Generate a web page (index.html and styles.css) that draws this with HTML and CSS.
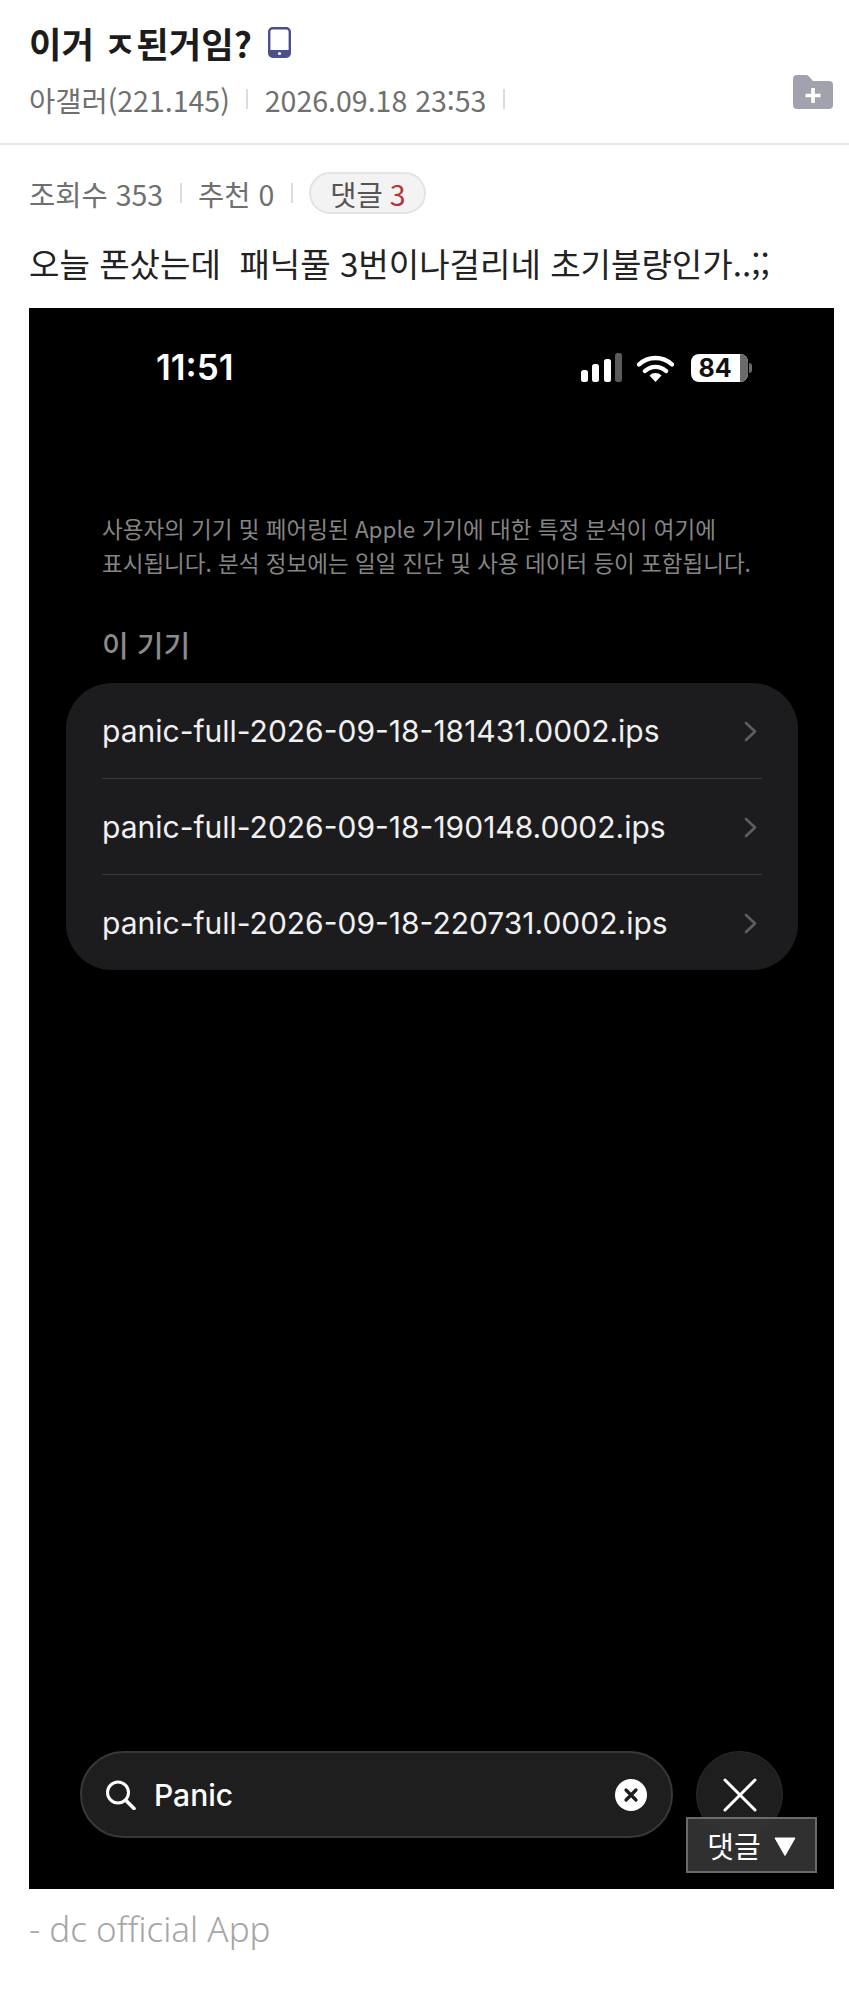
FILE: index.html
```html
<!DOCTYPE html>
<html lang="ko">
<head>
<meta charset="utf-8">
<title>이거 ㅈ된거임?</title>
<link rel="stylesheet" href="styles.css">
</head>
<body>
<header class="post-head">
  <h1 class="title">이거 ㅈ된거임?
    <svg class="phone-icon" viewBox="0 0 23 31" aria-hidden="true"><rect x="1.2" y="1.2" width="20.6" height="28.6" rx="3.5" fill="#fff" stroke="#4b4f88" stroke-width="2.4"/><path d="M1 23h21v4a3 3 0 0 1-3 3H4a3 3 0 0 1-3-3z" fill="#4b4f88"/><circle cx="11.5" cy="26.5" r="1.6" fill="#fff"/></svg>
  </h1>
  <div class="meta-row">
    <div class="meta">
      <span>아갤러(221.145)</span><i class="sep"></i><span>2026.09.18 23:53</span><i class="sep"></i>
    </div>
    <svg class="folder-icon" viewBox="0 0 40 34" aria-hidden="true"><path d="M0 4a4 4 0 0 1 4-4h9a4 4 0 0 1 3 1.4L20 6h16a4 4 0 0 1 4 4v20a4 4 0 0 1-4 4H4a4 4 0 0 1-4-4z" fill="#a1a2ad"/><path d="M20 13v15M12.5 20.5h15" stroke="#fff" stroke-width="3.6" fill="none"/></svg>
  </div>
</header>
<section class="stats">
  <span>조회수 353</span><i class="sep"></i><span>추천 0</span><i class="sep"></i>
  <span class="pill">댓글 <b class="count">3</b></span>
</section>
<p class="body-text">오늘 폰샀는데&nbsp; 패닉풀 3번이나걸리네 초기불량인가..;;</p>
<main class="screen">
  <div class="status">
    <span class="clock">11:51</span>
    <div class="status-icons">
      <svg class="signal" viewBox="0 0 41 29" aria-hidden="true"><rect x="0" y="17" width="7" height="12" rx="2.5" fill="#fff"/><rect x="11" y="11" width="7" height="18" rx="2.5" fill="#fff"/><rect x="23" y="6" width="7" height="23" rx="2.5" fill="#fff"/><rect x="34" y="0" width="7" height="29" rx="2.5" fill="#5a5a5a"/></svg>
      <svg class="wifi" viewBox="0 0 37 29" aria-hidden="true"><path d="M2 11.5a24 24 0 0 1 33 0M8 18a15.500 15.500 0 0 1 21 0" fill="none" stroke="#fff" stroke-width="4.4" stroke-linecap="round"/><path d="M12.500 22.500a8.500 8.500 0 0 1 12 0L18.500 29z" fill="#fff"/></svg>
      <div class="battery"><span class="battery-num">84</span><i class="battery-rest"></i></div>
      <i class="battery-cap"></i>
    </div>
  </div>
  <p class="desc">사용자의 기기 및 페어링된 Apple 기기에 대한 특정 분석이 여기에<br>표시됩니다. 분석 정보에는 일일 진단 및 사용 데이터 등이 포함됩니다.</p>
  <h2 class="group">이 기기</h2>
  <ul class="list">
    <li class="row"><span>panic-full-2026-09-18-181431.0002.ips</span><svg class="chev" viewBox="0 0 13 21" aria-hidden="true"><path d="M2 2l9 8.500-9 8.500" fill="none" stroke="#5e5e60" stroke-width="2.600" stroke-linecap="round" stroke-linejoin="round"/></svg></li>
    <li class="row"><span>panic-full-2026-09-18-190148.0002.ips</span><svg class="chev" viewBox="0 0 13 21" aria-hidden="true"><path d="M2 2l9 8.500-9 8.500" fill="none" stroke="#5e5e60" stroke-width="2.600" stroke-linecap="round" stroke-linejoin="round"/></svg></li>
    <li class="row"><span>panic-full-2026-09-18-220731.0002.ips</span><svg class="chev" viewBox="0 0 13 21" aria-hidden="true"><path d="M2 2l9 8.500-9 8.500" fill="none" stroke="#5e5e60" stroke-width="2.600" stroke-linecap="round" stroke-linejoin="round"/></svg></li>
  </ul>
  <div class="search-bar">
    <div class="search">
      <svg class="search-icon" viewBox="0 0 32 30" aria-hidden="true"><circle cx="13" cy="12.500" r="10.500" fill="none" stroke="#fff" stroke-width="3"/><path d="M21 20.500l8 8" stroke="#fff" stroke-width="3.600" stroke-linecap="round"/></svg>
      <span class="query">Panic</span>
      <svg class="clear-icon" viewBox="0 0 32 32" aria-hidden="true"><circle cx="16" cy="16" r="16" fill="#fff"/><path d="M11 11l10 10M21 11L11 21" stroke="#1e1e1e" stroke-width="3.200" stroke-linecap="round"/></svg>
    </div>
    <div class="close">
      <svg class="close-icon" viewBox="0 0 34 34" aria-hidden="true"><path d="M2 2l30 30M32 2L2 32" stroke="#fff" stroke-width="3" stroke-linecap="round"/></svg>
    </div>
  </div>
  <div class="comment-btn">댓글 <svg class="tri" viewBox="0 0 22 19" aria-hidden="true"><path d="M1 1h20L11 18.500z" fill="#fff" stroke="#fff" stroke-linejoin="round"/></svg></div>
</main>
<footer class="sig">- dc official App</footer>
</body>
</html>
```
FILE: styles.css
```css
* { box-sizing: border-box; }
html, body { margin: 0; padding: 0; background: #fff; }
body {
  width: 849px;
  height: 2004px;
  overflow: hidden;
  font-family: "Noto Sans CJK KR", "Noto Sans", sans-serif;
  color: #222;
}
.post-head {
  height: 145px;
  padding: 21px 16px 0 29px;
  border-bottom: 2px solid #e6e6e6;
}
.title {
  display: flex;
  align-items: center;
  gap: 16px;
  margin: 0;
  height: 44px;
  font-size: 35.300px;
  line-height: 44px;
  font-weight: 700;
  color: #1c1c1c;
}
.phone-icon { width: 23px; height: 31px; margin-top: -1px; }
.meta-row {
  display: flex;
  justify-content: space-between;
  align-items: center;
  margin-top: 13px;
  height: 42px;
}
.meta, .stats {
  display: flex;
  align-items: center;
  font-size: 28.500px;
  color: #6f6f6f;
}
.sep {
  display: block;
  width: 2px;
  height: 20px;
  background: #dcdcdc;
  margin: 0 16.500px;
}
.folder-icon { width: 40px; height: 34px; margin-top: -15px; }
.stats {
  height: 42px;
  margin: 27px 0 0 29px;
}
.pill {
  display: flex;
  align-items: center;
  justify-content: center;
  gap: 7px;
  width: 117px;
  height: 42px;
  border: 2px solid #e3e3e3;
  border-radius: 21px;
  background: #f3f3f3;
  color: #555;
}
.count { font-weight: 400; color: #b5333a; }
.body-text {
  margin: 27px 0 0 29px;
  font-size: 33.100px;
  line-height: 44px;
  color: #222;
  white-space: nowrap;
}
.screen {
  position: relative;
  display: flex;
  flex-direction: column;
  width: 805px;
  height: 1581px;
  margin: 23px 0 0 29px;
  padding-top: 45px;
  background: #000;
  color: #fff;
  font-family: "Inter", "Noto Sans CJK KR", sans-serif;
}
.status {
  display: flex;
  justify-content: space-between;
  align-items: center;
  height: 29px;
  padding: 0 82px 0 127px;
}
.clock { font-size: 35px; font-weight: 600; margin-top: -2px; }
.status-icons { display: flex; align-items: center; }
.signal { width: 41px; height: 29px; }
.wifi { width: 37px; height: 29px; margin-left: 15px; }
.battery {
  position: relative;
  display: flex;
  align-items: center;
  justify-content: center;
  width: 57px;
  height: 28px;
  margin-left: 17px;
  border-radius: 8px;
  background: #fff;
  overflow: hidden;
  padding-right: 9px;
}
.battery-num { color: #111; font-size: 25px; font-weight: 700; line-height: 28px; }
.battery-rest {
  position: absolute;
  right: 0;
  top: 0;
  width: 8px;
  height: 100%;
  background: #6a6a6a;
}
.battery-cap {
  display: block;
  width: 3px;
  height: 10px;
  margin-left: 1px;
  border-radius: 0 3px 3px 0;
  background: #6a6a6a;
}
.desc {
  margin: 129px 0 0 73px;
  font-family: "Noto Sans CJK KR", sans-serif;
  font-size: 22.500px;
  line-height: 34px;
  color: #858585;
  white-space: nowrap;
}
.group {
  margin: 45px 0 0 73px;
  height: 40px;
  font-family: "Noto Sans CJK KR", sans-serif;
  font-size: 29px;
  line-height: 40px;
  font-weight: 500;
  color: #8a8a8a;
}
.list {
  list-style: none;
  width: 732px;
  height: 287px;
  margin: 19px 0 0 37px;
  padding: 0 36px;
  border-radius: 46px;
  background: #1c1c1e;
}
.row {
  display: flex;
  justify-content: space-between;
  align-items: center;
  height: 96px;
  padding: 1px 5px 0 0;
  border-bottom: 1px solid #3a3a3c;
  font-size: 30px;
  color: #f0f0f0;
}
.row:last-child { height: 95px; border-bottom: 0; }
.chev { width: 13px; height: 21px; }
.search-bar {
  display: flex;
  gap: 23px;
  margin: auto 0 51px 51px;
}
.search {
  display: flex;
  align-items: center;
  width: 593px;
  height: 87px;
  padding: 0 24px 0 23px;
  border: 2px solid #383838;
  border-radius: 44px;
  background: #1e1e1e;
}
.search-icon { width: 32px; height: 30px; }
.query { margin-left: 17px; font-size: 30px; font-weight: 500; }
.clear-icon { width: 32px; height: 32px; margin-left: auto; }
.close {
  display: flex;
  align-items: center;
  justify-content: center;
  width: 87px;
  height: 87px;
  border-radius: 50%;
  background: #1e1e1e;
  border: 1px solid #2c2c2c;
}
.close-icon { width: 34px; height: 34px; }
.comment-btn {
  position: absolute;
  right: 17px;
  bottom: 16px;
  display: flex;
  align-items: center;
  justify-content: center;
  gap: 13px;
  width: 131px;
  height: 56px;
  border: 2px solid #6a6a6a;
  background: rgba(52, 52, 52, 0.92);
  font-family: "Noto Sans CJK KR", sans-serif;
  font-size: 29px;
  line-height: 56px;
  color: #fff;
}
.tri { width: 22px; height: 19px; margin-top: 2px; }
.sig {
  margin: 20px 0 0 29px;
  font-family: "Noto Sans", "Noto Sans CJK KR", sans-serif;
  font-size: 35px;
  line-height: 40px;
  font-weight: 300;
  color: #a6a6a6;
}
```
